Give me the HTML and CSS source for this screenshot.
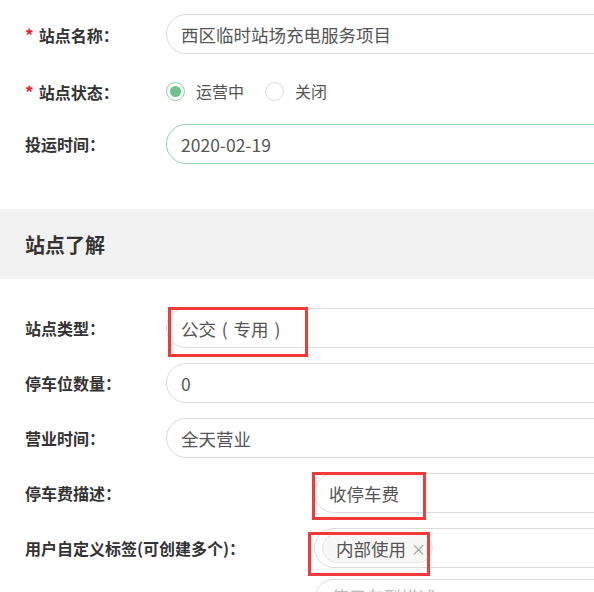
FILE: index.html
```html
<!DOCTYPE html>
<html lang="zh-CN">
<head>
  <meta charset="UTF-8" />
  <meta name="viewport" content="width=device-width, initial-scale=1.0" />
  <title>站点信息</title>
  <link rel="stylesheet" href="styles.css">
</head>
<body>
  <div class="group group-top">
    <div class="row">
      <label class="label"><span class="req">*</span>站点名称：</label>
      <div class="field">
        <input class="input" type="text" value="西区临时站场充电服务项目" />
      </div>
    </div>
    <div class="row row-radio">
      <label class="label"><span class="req">*</span>站点状态：</label>
      <div class="radios">
        <span class="radio checked"><i></i>运营中</span>
        <span class="radio"><i></i>关闭</span>
      </div>
    </div>
    <div class="row">
      <label class="label">投运时间：</label>
      <div class="field">
        <input class="input input-active" type="text" value="2020-02-19" />
      </div>
    </div>
  </div>

  <div class="section-title">站点了解</div>

  <div class="group group-info">
    <div class="row">
      <label class="label">站点类型：</label>
      <div class="field">
        <input class="input" type="text" value="公交&#8196;(&#8196;专用&#8196;)" />
        <div class="mark mark-type"></div>
      </div>
    </div>
    <div class="row">
      <label class="label">停车位数量：</label>
      <div class="field">
        <input class="input" type="text" value="0" />
      </div>
    </div>
    <div class="row">
      <label class="label">营业时间：</label>
      <div class="field">
        <input class="input" type="text" value="全天营业" />
      </div>
    </div>
    <div class="row row-wide">
      <label class="label">停车费描述：</label>
      <div class="field">
        <input class="input" type="text" value="收停车费" />
        <div class="mark mark-fee"></div>
      </div>
    </div>
    <div class="row row-wide">
      <label class="label">用户自定义标签(可创建多个)：</label>
      <div class="field">
        <div class="input tags">
          <span class="tag">内部使用<b>×</b></span>
        </div>
        <div class="mark mark-tag"></div>
      </div>
    </div>
    <div class="row row-wide row-area">
      <label class="label"></label>
      <div class="field">
        <textarea class="input textarea" placeholder="使用车型描述"></textarea>
      </div>
    </div>
  </div>
</body>
</html>
```

FILE: styles.css
```css
body {
  margin: 0;
  font-family: "Noto Sans CJK SC", "Noto Sans", sans-serif;
  color: #333;
  background: #fff;
  overflow: hidden;
}
.group {
  padding-left: 25px;
}
.group-top {
  padding-top: 14px;
  padding-bottom: 30px;
}
.group-info {
  padding-top: 29px;
}
.row {
  display: flex;
  align-items: center;
  height: 40px;
  margin-bottom: 15px;
}
.row-radio {
  height: 36px;
  padding-top: 4px;
}
.row-area {
  align-items: flex-start;
  height: 80px;
  margin-top: -4px;
}
.label {
  flex: 0 0 141px;
  font-size: 16px;
  font-weight: bold;
  color: #333;
  white-space: nowrap;
}
.row-wide .label {
  flex-basis: 289px;
}
.req {
  color: #f5222d;
  font-size: 17px;
  margin-right: 5px;
}
.field {
  position: relative;
  flex-shrink: 0;
}
.input {
  box-sizing: border-box;
  width: 480px;
  height: 40px;
  padding: 0 14px;
  border: 1px solid #dcdcdc;
  border-radius: 20px;
  font: inherit;
  font-size: 17.5px;
  color: #555;
  outline: none;
  background: #fff;
}
.input::placeholder {
  color: #bbb;
}
.input-active {
  border-color: #98d3a9;
}
.textarea {
  display: block;
  height: 80px;
  padding: 4px 16px;
  resize: none;
}
.radios {
  display: flex;
  align-items: center;
  gap: 21px;
  font-size: 16px;
  color: #555;
}
.radio {
  display: flex;
  align-items: center;
  gap: 11px;
}
.radio i {
  box-sizing: border-box;
  width: 19px;
  height: 19px;
  border: 1px solid #dcdcdc;
  border-radius: 50%;
  display: flex;
  align-items: center;
  justify-content: center;
}
.radio.checked i {
  border-color: #8fd0a1;
}
.radio.checked i::after {
  content: "";
  width: 11px;
  height: 11px;
  border-radius: 50%;
  background: #6cc48b;
}
.section-title {
  height: 70px;
  display: flex;
  align-items: center;
  padding-left: 25px;
  background: #f2f2f2;
  font-size: 20px;
  font-weight: bold;
  color: #333;
}
.tags {
  display: flex;
  align-items: center;
  padding-left: 7px;
}
.tag {
  box-sizing: border-box;
  height: 30px;
  display: flex;
  align-items: center;
  padding: 0 6px 0 13px;
  border: 1px solid #e6e6e6;
  border-radius: 15px;
  background: #f7f7f7;
  font-size: 17.5px;
  color: #555;
}
.tag b {
  font-weight: normal;
  font-size: 15px;
  color: #999;
  margin-left: 5px;
}
.mark {
  position: absolute;
  box-sizing: border-box;
  border: 3px solid #f23a3a;
  pointer-events: none;
}
.mark-type {
  left: 2px;
  top: -1px;
  width: 140px;
  height: 50px;
}
.mark-fee {
  left: -2px;
  top: -1px;
  width: 114px;
  height: 48px;
}
.mark-tag {
  left: -6px;
  top: 4px;
  width: 122px;
  height: 44px;
}
```
